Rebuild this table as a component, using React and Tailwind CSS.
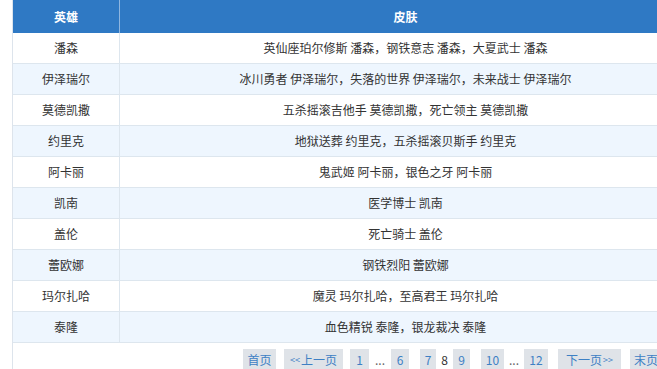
const rows = [
  ["潘森", "英仙座珀尔修斯 潘森，钢铁意志 潘森，大夏武士 潘森"],
  ["伊泽瑞尔", "冰川勇者 伊泽瑞尔，失落的世界 伊泽瑞尔，未来战士 伊泽瑞尔"],
  ["莫德凯撒", "五杀摇滚吉他手 莫德凯撒，死亡领主 莫德凯撒"],
  ["约里克", "地狱送葬 约里克，五杀摇滚贝斯手 约里克"],
  ["阿卡丽", "鬼武姬 阿卡丽，银色之牙 阿卡丽"],
  ["凯南", "医学博士 凯南"],
  ["盖伦", "死亡骑士 盖伦"],
  ["蕾欧娜", "钢铁烈阳 蕾欧娜"],
  ["玛尔扎哈", "魔灵 玛尔扎哈，至高君王 玛尔扎哈"],
  ["泰隆", "血色精锐 泰隆，银龙裁决 泰隆"],
];

const PageBox = ({ children, className = "" }) => (
  <span className={`h-[22px] flex items-center bg-[#dfe3e8] text-[#3d80c4] ${className}`}>
    {children}
  </span>
);

export default function App() {
  return (
    <div
      className="w-[657px] h-[369px] overflow-hidden bg-white text-[12px] text-[#333]"
      style={{ fontFamily: '"Noto Sans CJK SC", "Noto Sans", sans-serif' }}
    >
      <div className="ml-[12px] w-[679px] h-[369px] border-l border-[#dde4ec]">
        <div className="flex h-[33px] bg-[#2f79c4] text-white font-bold">
          <div className="w-[107px] border-r border-[#8fb6e0] flex items-center justify-center">英雄</div>
          <div className="flex-1 flex items-center justify-center">皮肤</div>
        </div>
        {rows.map(([hero, skins], i) => (
          <div
            key={hero}
            className={`flex h-[31px] border-b border-[#dde6ee] ${i % 2 ? "bg-[#eef6fe]" : "bg-white"}`}
          >
            <div className="w-[107px] border-r border-[#dde6ee] flex items-center justify-center">{hero}</div>
            <div className="flex-1 flex items-center justify-center">{skins}</div>
          </div>
        ))}
        <div className="flex items-center mt-[6px] pl-[230px] text-[#3d80c4] whitespace-nowrap">
          <PageBox className="w-[33px] justify-center">首页</PageBox>
          <PageBox className="ml-[8px] w-[59px] justify-center">
            <span className="text-[9px] mr-[1px]">&lt;&lt;</span>上一页
          </PageBox>
          <PageBox className="ml-[7px] w-[19px] justify-center">1</PageBox>
          <span className="w-[22px] text-center text-[#666]">...</span>
          <PageBox className="w-[18px] justify-center">6</PageBox>
          <PageBox className="ml-[11px] w-[16px] justify-center">7</PageBox>
          <span className="w-[17px] text-center text-[#333]">8</span>
          <PageBox className="w-[17px] justify-center">9</PageBox>
          <PageBox className="ml-[11px] w-[23px] justify-center">10</PageBox>
          <span className="w-[20px] text-center text-[#666]">...</span>
          <PageBox className="w-[24px] justify-center">12</PageBox>
          <PageBox className="ml-[10px] w-[63px] justify-center">
            下一页<span className="text-[9px] ml-[1px]">&gt;&gt;</span>
          </PageBox>
          <PageBox className="ml-[9px] w-[40px] pl-[4px]">末页</PageBox>
        </div>
      </div>
    </div>
  );
}
